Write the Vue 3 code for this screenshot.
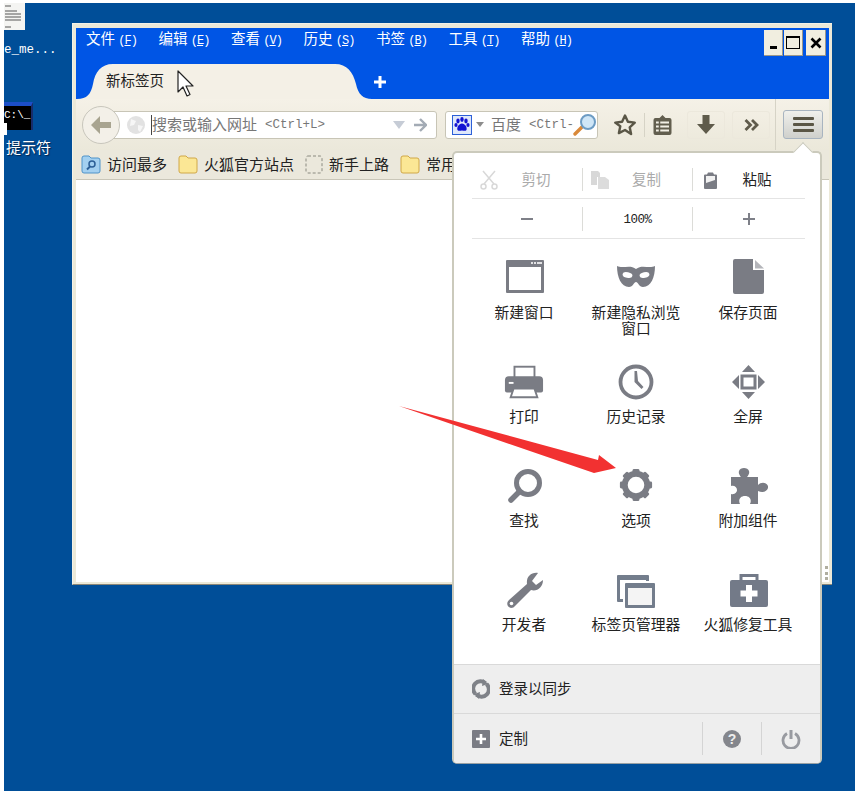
<script setup>
const menus = [
  ['文件', 'F'], ['编辑', 'E'], ['查看', 'V'], ['历史', 'S'],
  ['书签', 'B'], ['工具', 'T'], ['帮助', 'H'],
]
const gearAngles = [0, 45, 90, 135, 180, 225, 270, 315]
</script>

<template>
  <div class="desktop">
    <div class="desk-doc">
      <svg width="21" height="27" viewBox="0 0 21 27">
        <rect width="21" height="27" fill="#f4f4f2" />
        <path d="M1 3h6M1 8h12M1 11h16M1 14h16M1 17h16M1 24h6" stroke="#8a8a8a" stroke-width="1.4" />
      </svg>
      <span class="desk-file">e_me...</span>
    </div>
    <div class="desk-cmd">
      <div class="cmd-box"><span>C:\_</span></div>
      <span class="cmd-caret"></span>
      <span class="cmd-label">提示符</span>
    </div>

    <div class="window">
      <div class="titlebar">
        <div class="top-row">
          <div v-for="m in menus" :key="m[0]" class="menu-item">{{ m[0] }} <span class="mn">(<u>{{ m[1] }}</u>)</span></div>
          <div class="controls">
            <div class="ctl"><span class="min-bar"></span></div>
            <div class="ctl"><span class="max-box"></span></div>
            <div class="ctl close">
              <svg width="12" height="12" viewBox="0 0 12 12"><path d="M1.5 1.5l9 9M10.5 1.5l-9 9" stroke="#000" stroke-width="2.6" /></svg>
            </div>
          </div>
        </div>
        <div class="tab-strip">
          <div class="tab">
            <svg class="tab-bg" width="295" height="35" viewBox="0 0 295 35"><path d="M0 35C10 35 14 30 16 20C18 8 24 0 36 0H258C270 0 276 8 279 20C281 30 286 35 295 35Z" fill="#f4f0e6" /></svg>
            <span class="tab-text">新标签页</span>
          </div>
          <svg class="new-tab" width="14" height="14" viewBox="0 0 14 14"><path d="M7 1v12M1 7h12" stroke="#fff" stroke-width="3" /></svg>
        </div>
      </div>

      <div class="nav">
        <div class="back">
          <svg width="24" height="20" viewBox="0 0 24 20"><path d="M11 1L2 10l9 9v-6h11V7H11z" fill="#a8a490" /></svg>
        </div>
        <div class="urlbar">
          <svg class="globe" width="20" height="20" viewBox="0 0 20 20">
            <circle cx="10" cy="10" r="9" fill="#e2e2e2" />
            <path d="M5 4l5 2-2 4-4 1zM12 10l5 1-3 6-2-2z" fill="#f6f6f6" />
          </svg>
          <span class="caret-text">搜索或输入网址</span>
          <span class="hint">&lt;Ctrl+L&gt;</span>
          <svg class="drop" width="14" height="10" viewBox="0 0 14 10"><path d="M1 1h12L7 9z" fill="#c6ccd6" /></svg>
          <svg class="go" width="14" height="14" viewBox="0 0 14 14"><path d="M7 1l6 6-6 6M12 7H1" fill="none" stroke="#a3abb5" stroke-width="2.4" /></svg>
        </div>
        <div class="searchbar">
          <svg width="20" height="20" viewBox="0 0 20 20">
            <rect x=".5" y=".5" width="19" height="19" fill="#dfe8fa" stroke="#2b5fd8" />
            <g fill="#1212d2">
              <ellipse cx="6" cy="6" rx="1.7" ry="2.4" /><ellipse cx="10" cy="4.5" rx="1.7" ry="2.4" />
              <ellipse cx="14" cy="6" rx="1.7" ry="2.4" /><ellipse cx="4" cy="10" rx="1.6" ry="2" /><ellipse cx="16" cy="10" rx="1.6" ry="2" />
              <path d="M10 8.5c3 0 5.500 4 4.500 6.500-1 1.500-3 .5-4.500.5s-3.500 1-4.500-.5C4.500 12.500 7 8.500 10 8.500z" />
            </g>
          </svg>
          <svg class="s-drop" width="8" height="5" viewBox="0 0 8 5"><path d="M0 0h8L4 5z" fill="#8c8c8c" /></svg>
          <span class="s-name">百度</span>
          <span class="s-hint">&lt;Ctrl-</span>
          <svg class="s-glass" width="24" height="24" viewBox="0 0 24 24">
            <path d="M9 14L2 21" stroke="#d9893a" stroke-width="3.400" stroke-linecap="round" />
            <circle cx="15" cy="9" r="7" fill="#cfe6f7" stroke="#6d9cc4" stroke-width="2" />
          </svg>
        </div>
        <svg class="star" width="24" height="24" viewBox="0 0 24 24"><path d="M12 2.500l2.900 6.300 6.900.8-5.100 4.700 1.400 6.800L12 17l-6.100 3.100 1.400-6.800L2.200 9.600l6.900-.8z" fill="none" stroke="#5a5646" stroke-width="2.400" stroke-linejoin="round" /></svg>
        <span class="nav-sep short"></span>
        <svg class="list" width="19" height="20" viewBox="0 0 19 20">
          <path d="M9.500 0l3 3h4a2 2 0 0 1 2 2v13a2 2 0 0 1-2 2h-14a2 2 0 0 1-2-2V5a2 2 0 0 1 2-2h4z" fill="#625e4e" />
          <path d="M3 6.500h13v2H3zM3 10.500h13v2H3zM3 14.500h13v2H3z" fill="#f2efe5" />
          <path d="M6.500 6v11" stroke="#625e4e" stroke-width="1.500" />
        </svg>
        <div class="tool-btn dl">
          <svg width="18" height="19" viewBox="0 0 18 19"><path d="M5.500 0h7v9H18l-9 10L0 9h5.500z" fill="#5f5b4b" /></svg>
        </div>
        <div class="tool-btn more">
          <svg width="15" height="12" viewBox="0 0 15 12"><path d="M1.500 1l5 5-5 5M8 1l5 5-5 5" fill="none" stroke="#5f5b4b" stroke-width="2.800" /></svg>
        </div>
        <span class="nav-sep tall"></span>
        <div class="menu-btn"><span></span><span></span><span></span></div>
      </div>

      <div class="bookmarks">
        <div class="bm first">
          <svg width="20" height="19" viewBox="0 0 20 19">
            <path d="M1 3a2 2 0 0 1 2-2h5l2 2h7a2 2 0 0 1 2 2v11a2 2 0 0 1-2 2H3a2 2 0 0 1-2-2z" fill="#a3d0f0" stroke="#4f93c9" />
            <circle cx="11" cy="9" r="3" fill="none" stroke="#2c5f96" stroke-width="1.500" />
            <path d="M9 11.500l-3 3" stroke="#2c5f96" stroke-width="2" />
          </svg>
          <span>访问最多</span>
        </div>
        <div class="bm">
          <svg width="20" height="19" viewBox="0 0 20 19"><path d="M1 3a2 2 0 0 1 2-2h5l2 2h7a2 2 0 0 1 2 2v11a2 2 0 0 1-2 2H3a2 2 0 0 1-2-2z" fill="#fbe795" stroke="#d0a848" /></svg>
          <span>火狐官方站点</span>
        </div>
        <div class="bm">
          <svg width="18" height="19" viewBox="0 0 18 19"><rect x="1" y="1" width="16" height="17" rx="2" fill="none" stroke="#8a8a80" stroke-dasharray="3 2" /></svg>
          <span>新手上路</span>
        </div>
        <div class="bm">
          <svg width="20" height="19" viewBox="0 0 20 19"><path d="M1 3a2 2 0 0 1 2-2h5l2 2h7a2 2 0 0 1 2 2v11a2 2 0 0 1-2 2H3a2 2 0 0 1-2-2z" fill="#fbe795" stroke="#d0a848" /></svg>
          <span>常用</span>
        </div>
      </div>
      <div class="content">
        <span class="grip"></span>
      </div>
    </div>

    <svg class="cursor" width="17" height="28" viewBox="0 0 17 28">
      <path d="M1 1v21l5-5 4 9 3-1.500-4-8.500h7z" fill="#fff" stroke="#222" stroke-width="1.200" stroke-linejoin="round" />
    </svg>

    <div class="panel">
      <div class="main">
        <div class="edit-row">
          <div class="edit-cell">
            <svg class="edit-icon" width="18" height="20" viewBox="0 0 18 20">
              <path d="M3 1l11 13M15 1L4 14" stroke="#d8d8d8" stroke-width="1.500" />
              <circle cx="3.500" cy="16.500" r="2.500" fill="none" stroke="#d8d8d8" stroke-width="1.500" />
              <circle cx="14.500" cy="16.500" r="2.500" fill="none" stroke="#d8d8d8" stroke-width="1.500" />
            </svg>
            <span class="off">剪切</span>
          </div>
          <div class="edit-cell">
            <svg class="edit-icon" width="18" height="18" viewBox="0 0 18 18">
              <path d="M0 0h7l2 2v4H6v8H0z" fill="#d8d8d8" />
              <path d="M7 6h7l4 3v9H7z" fill="#dcdcdc" />
            </svg>
            <span class="off">复制</span>
          </div>
          <div class="edit-cell">
            <svg class="edit-icon" width="13" height="18" viewBox="0 0 13 18">
              <path d="M4 1.500h5l1 2h2a1 1 0 0 1 1 1V17a1 1 0 0 1-1 1H1a1 1 0 0 1-1-1V4.500a1 1 0 0 1 1-1h2z" fill="#7a7c84" />
              <path d="M2 5h9v4L2 12z" fill="#f2f2f2" />
            </svg>
            <span>粘贴</span>
          </div>
        </div>
        <div class="zoom-row">
          <div class="zoom-cell"><span class="minus"></span></div>
          <div class="zoom-cell pct">100%</div>
          <div class="zoom-cell">
            <svg width="12" height="12" viewBox="0 0 12 12"><path d="M6 0v12M0 6h12" stroke="#7e8088" stroke-width="2" /></svg>
          </div>
        </div>

        <div class="grid">
          <div class="cell">
            <svg width="40" height="40" viewBox="0 0 40 40">
              <rect x="2" y="3" width="38" height="33" rx="1" fill="#7a7c84" />
              <rect x="5" y="10" width="32" height="23" fill="#fff" />
              <path d="M27 5h2v2h-2zM30 5h2v2h-2zM33 5h5v2h-5z" fill="#e2e2e4" />
            </svg>
            <span>新建窗口</span>
          </div>
          <div class="cell">
            <svg width="40" height="40" viewBox="0 0 40 40">
              <path d="M1 9C7 12 14 7 20 12C26 7 33 12 39 9C39 20 35 30 27 30C23 30 22 25 20 25C18 25 17 30 13 30C5 30 1 20 1 9Z" fill="#7a7c84" />
              <ellipse cx="11.500" cy="18" rx="5" ry="2.800" transform="rotate(12 11.500 18)" fill="#fff" />
              <ellipse cx="28.500" cy="18" rx="5" ry="2.800" transform="rotate(-12 28.500 18)" fill="#fff" />
            </svg>
            <span>新建隐私浏览<br />窗口</span>
          </div>
          <div class="cell">
            <svg width="40" height="40" viewBox="0 0 40 40">
              <path d="M7 2H25V13H36V35a2 2 0 0 1-2 2H7a2 2 0 0 1-2-2V4a2 2 0 0 1 2-2Z" fill="#7a7c84" />
              <path d="M27 3l9 8.500h-9z" fill="#b4b5ba" />
            </svg>
            <span>保存页面</span>
          </div>

          <div class="cell">
            <svg width="40" height="40" viewBox="0 0 42 40">
              <rect x="11" y="5" width="21" height="14" fill="#fff" stroke="#7a7c84" stroke-width="2" />
              <path d="M5 15H37a4 4 0 0 1 4 4V30a2 2 0 0 1-2 2H3a2 2 0 0 1-2-2V19a4 4 0 0 1 4-4Z" fill="#7a7c84" />
              <path d="M5 21h5v2H5z" fill="#fff" />
              <path d="M10 28H32L35 37H7Z" fill="#fff" stroke="#7a7c84" stroke-width="2" />
            </svg>
            <span>打印</span>
          </div>
          <div class="cell">
            <svg width="40" height="40" viewBox="0 0 40 40">
              <circle cx="20" cy="21" r="15.500" fill="none" stroke="#7a7c84" stroke-width="3.800" />
              <path d="M18.500 10h2.500l1 10 5.500 6-2 2-7-7z" fill="#7a7c84" />
            </svg>
            <span>历史记录</span>
          </div>
          <div class="cell">
            <svg width="40" height="40" viewBox="0 0 40 40">
              <path d="M20.500 4L27 11H14ZM20.500 38L27 31H14ZM4 21L11 14V28ZM37 21L30 14V28Z" fill="#7a7c84" />
              <rect x="14" y="15" width="13" height="12" fill="none" stroke="#7a7c84" stroke-width="3" />
            </svg>
            <span>全屏</span>
          </div>

          <div class="cell">
            <svg width="40" height="40" viewBox="0 0 40 40">
              <circle cx="24" cy="18" r="11.500" fill="none" stroke="#7a7c84" stroke-width="5" />
              <path d="M15.500 26.500L7 35" stroke="#7a7c84" stroke-width="5.500" stroke-linecap="round" />
            </svg>
            <span>查找</span>
          </div>
          <div class="cell">
            <svg width="40" height="40" viewBox="0 0 41 41">
              <circle cx="20.500" cy="20.500" r="11.500" fill="none" stroke="#7a7c84" stroke-width="6" />
              <rect v-for="a in gearAngles" :key="a" x="17" y="4" width="7" height="6" rx="1.500" fill="#7a7c84" :transform="`rotate(${a} 20.500 20.500)`" />
            </svg>
            <span>选项</span>
          </div>
          <div class="cell">
            <svg width="40" height="40" viewBox="0 0 40 40">
              <path d="M3 12H13C13 12 10 9 11 6C12 2 20 2 21 6C22 9 19 12 19 12H30V20C33 17 38 17 40 21C41 25 36 29 30 26V39H22C24 35 22 31 17 31C12 31 10 35 12 39H3V29C7 30 9 27 9 25C9 22 6 20 3 21Z" fill="#7a7c84" />
            </svg>
            <span>附加组件</span>
          </div>

          <div class="cell">
            <svg width="40" height="40" viewBox="0 0 40 40">
              <path d="M34 4C27 3 22 8 23 15L5 31C2 34 3 38 7 39C9 39 10 38 11 37L27 21C33 23 39 18 39 11L32 16L28 12Z" fill="#7a7c84" />
              <circle cx="7.500" cy="34.500" r="1.800" fill="#fff" />
            </svg>
            <span>开发者</span>
          </div>
          <div class="cell">
            <svg width="40" height="40" viewBox="0 0 40 40">
              <rect x="1" y="6" width="32" height="27" rx="1" fill="#737d8c" />
              <rect x="4" y="11" width="26" height="19" fill="#fff" />
              <rect x="7" y="12" width="33" height="28" rx="1" fill="#fff" />
              <rect x="9" y="14" width="30" height="25" rx="1" fill="#737d8c" />
              <rect x="12" y="19" width="24" height="17" fill="#f4f4f4" />
            </svg>
            <span>标签页管理器</span>
          </div>
          <div class="cell">
            <svg width="40" height="40" viewBox="0 0 40 40">
              <rect x="13" y="6.500" width="16" height="7" fill="none" stroke="#737a88" stroke-width="3" />
              <rect x="2" y="11" width="38" height="27" rx="2" fill="#737a88" />
              <path d="M18 16h6v5.500h5.500v6H24V33h-6v-5.500h-5.500v-6H18z" fill="#fff" />
            </svg>
            <span>火狐修复工具</span>
          </div>
        </div>
      </div>

      <div class="foot sync">
        <svg width="18" height="20" viewBox="0 0 18 20">
          <path d="M13.500 4.200A7 7 0 0 0 3.500 15" fill="none" stroke="#7f8288" stroke-width="4" />
          <path d="M4.500 15.800A7 7 0 0 0 14.500 5" fill="none" stroke="#7f8288" stroke-width="4" />
          <path d="M11 0l5 5-6 2zM7 20l-5-5 6-2z" fill="#7f8288" />
        </svg>
        <span>登录以同步</span>
      </div>
      <div class="foot custom">
        <svg width="18" height="18" viewBox="0 0 18 18">
          <rect width="18" height="18" rx="1" fill="#7a7c84" />
          <path d="M9 4v10M4 9h10" stroke="#fff" stroke-width="2.600" />
        </svg>
        <span>定制</span>
        <div class="foot-btn first-btn">
          <svg width="18" height="18" viewBox="0 0 18 18">
            <circle cx="9" cy="9" r="9" fill="#84868c" />
            <text x="9" y="14" text-anchor="middle" class="q">?</text>
          </svg>
        </div>
        <div class="foot-btn">
          <svg width="20" height="20" viewBox="0 0 20 20">
            <path d="M6 4.500a8 8 0 1 0 8 0" fill="none" stroke="#989aa0" stroke-width="2.800" />
            <path d="M10 1v9" stroke="#989aa0" stroke-width="3" />
          </svg>
        </div>
      </div>
    </div>

    <svg class="red-arrow" width="224" height="72" viewBox="0 0 224 72">
      <path d="M1 1L200 55L201 50L218 63L196 68Z" fill="#f23131" />
    </svg>
  </div>
</template>

<style scoped>
.desktop {
  position: relative;
  margin: 3px 0 0 4px;
  width: 851px;
  height: 788px;
  background: #004e98;
  overflow: hidden;
  font-family: "Noto Sans CJK SC", "Liberation Sans", sans-serif;
  font-size: 15px;
  color: #222;
}
.desk-doc {
  position: absolute;
  left: 0;
  top: 0;
  width: 60px;
}
.desk-doc svg { display: block; }
.desk-file {
  display: block;
  margin-top: 13px;
  font: 12.500px/14px "Liberation Mono", monospace;
  color: #fff;
  white-space: nowrap;
}
.desk-cmd {
  position: absolute;
  left: 0;
  top: 99px;
  width: 60px;
}
.cmd-box {
  width: 29px;
  height: 28px;
  background: #000;
  border-top: 4px solid #1c4fc8;
  border-right: 2px solid #182c6a;
  box-sizing: border-box;
  color: #fff;
  font: 11px/18px "Liberation Mono", monospace;
  overflow: hidden;
}
.cmd-caret {
  position: absolute;
  left: 0;
  top: 21px;
  width: 3px;
  height: 12px;
  background: #fff;
}
.cmd-label {
  display: block;
  margin: 8px 0 0 2px;
  line-height: 18px;
  color: #fff;
  text-shadow: 1px 1px 1px #00234a;
}
.window {
  position: absolute;
  left: 68px;
  top: 20px;
  width: 760px;
  height: 562px;
  box-sizing: border-box;
  padding: 4px 3px 2px 3px;
  background: #ece9d8;
  border-top: 1px solid #f4f2e8;
  border-left: 1px solid #f4f2e8;
  border-bottom: 1px solid #8a8678;
  display: flex;
  flex-direction: column;
}
.titlebar {
  height: 71px;
  background: #0055e5;
  flex: none;
}
.top-row {
  display: flex;
  height: 22px;
  padding-left: 10px;
}
.menu-item {
  width: 72.500px;
  flex: none;
  color: #fff;
  font-size: 14.500px;
  line-height: 20px;
  white-space: nowrap;
}
.mn {
  font: 12px/20px "Liberation Mono", monospace;
  letter-spacing: -1px;
}
.controls {
  margin-left: auto;
  display: flex;
  padding: 2px 3px 0 0;
  height: 26px;
}
.ctl {
  width: 19px;
  height: 26px;
  box-sizing: border-box;
  margin-left: 1px;
  background: #f1eee0;
  border-right: 1px solid #9c988a;
  border-bottom: 1px solid #9c988a;
  display: flex;
  align-items: center;
  justify-content: center;
  position: relative;
}
.close { margin-left: 3px; width: 20px; }
.min-bar {
  width: 7px;
  height: 3px;
  background: #000;
  margin-top: 9px;
}
.max-box {
  width: 12px;
  height: 10px;
  border: 1px solid #000;
  border-top-width: 2px;
}
.tab-strip {
  height: 35px;
  margin-top: 14px;
  padding-left: 1px;
  display: flex;
  align-items: center;
}
.tab {
  position: relative;
  width: 295px;
  height: 35px;
  flex: none;
}
.tab-bg {
  position: absolute;
  left: 0;
  top: 0;
}
.tab-text {
  position: absolute;
  left: 29px;
  top: 6px;
  line-height: 20px;
  font-size: 14.500px;
  color: #222;
}
.new-tab {
  margin: 1px 0 0 1px;
}
.nav {
  height: 51px;
  flex: none;
  display: flex;
  align-items: center;
  padding-left: 6px;
  background: linear-gradient(#f5f1e7, #ebe8da);
}
.back {
  position: relative;
  z-index: 1;
  width: 38px;
  height: 38px;
  box-sizing: border-box;
  border-radius: 50%;
  background: #f3f0e8;
  border: 1px solid #c8c6bc;
  display: flex;
  align-items: center;
  justify-content: center;
  flex: none;
}
.urlbar {
  width: 327px;
  height: 28px;
  margin-left: -10px;
  padding-left: 15px;
  box-sizing: border-box;
  background: #fff;
  border: 1px solid #c8c5b6;
  border-radius: 3px;
  display: flex;
  align-items: center;
  flex: none;
}
.globe { flex: none; }
.caret-text {
  margin-left: 5px;
  border-left: 1px solid #444;
  color: #777;
  line-height: 18px;
  padding-bottom: 2px;
  white-space: nowrap;
}
.hint {
  margin-left: 8px;
  color: #777;
  font: 12.500px "Liberation Mono", monospace;
  white-space: nowrap;
}
.drop { margin-left: auto; }
.go { margin: 0 9px 0 7px; }
.searchbar {
  width: 153px;
  height: 28px;
  margin-left: 8px;
  padding-left: 6px;
  box-sizing: border-box;
  background: #fff;
  border: 1px solid #c8c5b6;
  border-radius: 3px;
  display: flex;
  align-items: center;
  flex: none;
}
.s-drop { margin-left: 4px; flex: none; }
.s-name {
  margin-left: 7px;
  color: #777;
  padding-bottom: 2px;
  white-space: nowrap;
}
.s-hint {
  margin-left: 8px;
  color: #777;
  font: 12.500px "Liberation Mono", monospace;
  width: 45px;
  flex: none;
  white-space: nowrap;
}
.s-glass { margin-left: -1px; flex: none; }
.star { margin-left: 15px; flex: none; }
.nav-sep {
  width: 1px;
  flex: none;
  background: #d6d3c6;
}
.nav-sep.short { height: 24px; margin-left: 7px; }
.nav-sep.tall { height: 51px; margin-left: 5px; }
.list { margin-left: 8px; flex: none; }
.tool-btn {
  width: 38px;
  height: 28px;
  flex: none;
  box-sizing: border-box;
  border: 1px solid #ece8dc;
  border-radius: 3px;
  display: flex;
  align-items: center;
  justify-content: center;
}
.dl { margin-left: 15px; }
.more { margin-left: 7px; }
.menu-btn {
  width: 40px;
  height: 29px;
  margin-left: 7px;
  box-sizing: border-box;
  border: 1px solid #a8b4c0;
  border-radius: 3px;
  background: linear-gradient(#f0f0ec, #cfd0cc);
  display: flex;
  flex-direction: column;
  align-items: center;
  justify-content: center;
  gap: 3px;
  flex: none;
}
.menu-btn span {
  width: 21px;
  height: 3px;
  border-radius: 1px;
  background: #5a5646;
}
.bookmarks {
  height: 30px;
  flex: none;
  box-sizing: border-box;
  display: flex;
  align-items: center;
  padding-left: 5px;
  background: #ebe8dc;
  border-bottom: 1px solid #c9c6b8;
  overflow: hidden;
  font-size: 15px;
}
.bm {
  display: flex;
  align-items: center;
  gap: 6px;
  margin-left: 11px;
  white-space: nowrap;
  flex: none;
}
.bm span { padding-bottom: 3px; }
.bm.first { margin-left: 0; }
.content {
  flex: 1;
  position: relative;
  background: #fff;
}
.grip {
  position: absolute;
  right: 1px;
  bottom: 2px;
  width: 3px;
  height: 14px;
  background: repeating-linear-gradient(#b0ae9f 0 3px, transparent 3px 5.500px);
}
.cursor {
  position: absolute;
  left: 173px;
  top: 67px;
}
.panel {
  position: absolute;
  left: 448px;
  top: 148px;
  width: 370px;
  height: 613px;
  box-sizing: border-box;
  display: flex;
  flex-direction: column;
  background: #fff;
  border: 2px solid #cbcabc;
  border-bottom: 1px solid #98a0a4;
  border-radius: 5px;
}
.panel::before {
  content: "";
  position: absolute;
  left: 342px;
  top: -8px;
  width: 13px;
  height: 13px;
  background: #fff;
  border-top: 1px solid #cbcabc;
  border-left: 1px solid #cbcabc;
  transform: rotate(45deg);
}
.main {
  flex: 1;
  min-height: 0;
  padding: 15px 15px 0 18px;
  overflow: hidden;
  position: relative;
}
.edit-row {
  display: grid;
  grid-template-columns: 111px 110px 112px;
  height: 31px;
  border-bottom: 1px solid #e4e4e4;
  box-sizing: border-box;
}
.edit-cell {
  height: 23px;
  display: flex;
  align-items: center;
  box-sizing: border-box;
  padding-left: 8px;
  border-right: 1px solid #dcdcd8;
  font-size: 14.500px;
  color: #222;
}
.edit-cell:last-child { border-right: 0; padding-left: 11px; }
.edit-cell span {
  flex: 1;
  text-align: center;
  padding: 0 8px 3px 0;
}
.edit-cell .off { color: #aaa; }
.edit-icon { flex: none; }
.zoom-row {
  display: grid;
  grid-template-columns: 111px 110px 112px;
  margin-top: 8px;
  height: 32px;
  border-bottom: 1px solid #e4e4e4;
  box-sizing: border-box;
}
.zoom-cell {
  height: 24px;
  display: flex;
  align-items: center;
  justify-content: center;
  border-right: 1px solid #dcdcd8;
  box-sizing: border-box;
}
.zoom-cell:last-child { border-right: 0; }
.minus {
  width: 12px;
  height: 2px;
  background: #7e8088;
}
.pct {
  font: 12.500px "Liberation Mono", monospace;
  letter-spacing: -.5px;
  padding-top: 1px;
}
.grid {
  display: grid;
  grid-template-columns: repeat(3, 112px);
  grid-auto-rows: 104px;
  margin: 18px 0 0 -4px;
}
.cell {
  display: flex;
  flex-direction: column;
  align-items: center;
  text-align: center;
  white-space: nowrap;
  font-size: 14.800px;
  line-height: 16px;
}
.cell svg { flex: none; }
.cell span { margin-top: 7px; }
.foot {
  flex: none;
  box-sizing: border-box;
  background: #eee;
  border-top: 1px solid #d9d9d9;
  display: flex;
  align-items: center;
  padding-left: 18px;
  font-size: 14.500px;
}
.foot span { margin-left: 9px; padding-bottom: 3px; }
.sync { height: 49px; }
.custom {
  height: 50px;
  border-bottom-left-radius: 4px;
  border-bottom-right-radius: 4px;
}
.foot-btn {
  width: 59px;
  height: 33px;
  box-sizing: border-box;
  border-left: 1px solid #d4d4d4;
  display: flex;
  align-items: center;
  justify-content: center;
  flex: none;
}
.first-btn { margin-left: auto; }
.q {
  font: 700 14px "Liberation Sans", sans-serif;
  fill: #eee;
}
.red-arrow {
  position: absolute;
  left: 394px;
  top: 402px;
}
</style>

<style>
html, body {
  margin: 0;
  background: #fff;
}
</style>
